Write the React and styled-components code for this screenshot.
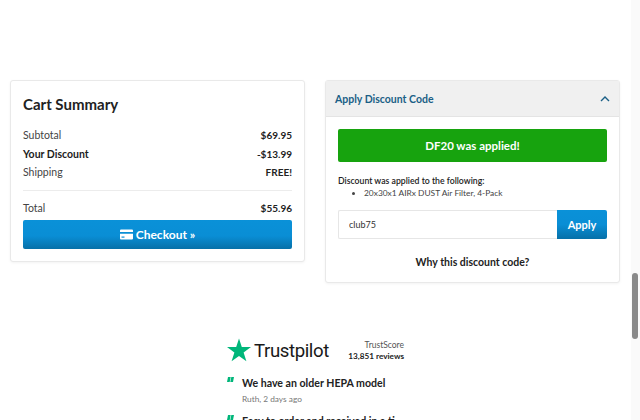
import React from "react";
import styled, { createGlobalStyle } from "styled-components";

const Global = createGlobalStyle`
  html, body { margin: 0; padding: 0; height: 420px; overflow: hidden; background: #fff; }
  body { font-family: "Lato", "Liberation Sans", sans-serif; color: #222; }
  #root { height: 420px; overflow: hidden; position: relative; }
  * { box-sizing: border-box; }
`;

const Page = styled.div`
  width: 640px;
  height: 420px;
  overflow: hidden;
  padding-top: 80px;
  padding-right: 20px;
  padding-left: 10px;
`;

const Columns = styled.div`
  display: grid;
  grid-template-columns: 295px 295px;
  column-gap: 20px;
  align-items: start;
`;

const Card = styled.section`
  background: #fff;
  border: 1px solid #e9e9e9;
  border-radius: 3px;
  box-shadow: 0 1px 3px rgba(0, 0, 0, 0.05);
`;

const SummaryCard = styled(Card)`
  height: 182px;
  padding: 13px 12px 13px 12px;
`;

const Title = styled.h2`
  margin: 0 0 12px;
  font-size: 15px;
  line-height: 20px;
  font-weight: 700;
  color: #222;
`;

const Row = styled.div`
  display: flex;
  justify-content: space-between;
  align-items: center;
  height: 18.5px;
  font-size: 10.5px;
  color: ${(p) => (p.$strong ? "#1c1c1c" : "#444")};
  font-weight: ${(p) => (p.$strong ? 700 : 400)};
`;

const Amount = styled.span`
  font-size: 10px;
  font-weight: 700;
  color: #222;
`;

const Divider = styled.hr`
  border: 0;
  border-top: 1px solid #ececec;
  margin: 8px 0 8px;
`;

const CheckoutButton = styled.button`
  width: 100%;
  height: 29px;
  margin-top: 3px;
  padding-bottom: 2px;
  border: 0;
  border-radius: 2px;
  background: linear-gradient(#0a91d8 0%, #0a8ed5 55%, #0670a8 100%);
  color: #fff;
  font: 700 12px "Lato", "Liberation Sans", sans-serif;
  display: flex;
  align-items: center;
  justify-content: center;
  gap: 3px;
`;

const AccordionHeader = styled.header`
  height: 36px;
  background: #f0f0f0;
  border-bottom: 1px solid #e4e4e4;
  display: flex;
  align-items: center;
  justify-content: space-between;
  padding: 0 9px 0 9px;
  color: #1a5f86;
  font-size: 10.5px;
  font-weight: 700;
`;

const DiscountBody = styled.div`
  height: 165px;
  padding: 12px 12px 0 12px;
  display: flex;
  flex-direction: column;
`;

const Applied = styled.div`
  height: 33px;
  background: #17a30e;
  border-radius: 2px;
  color: #fff;
  font-size: 11.5px;
  font-weight: 700;
  display: flex;
  align-items: center;
  justify-content: center;
`;

const AppliedNote = styled.p`
  margin: 12px 0 0;
  font-size: 8.7px;
  line-height: 13px;
  font-weight: 600;
  color: #222;
`;

const AppliedList = styled.ul`
  margin: 0;
  padding-left: 26px;
  font-size: 8.4px;
  line-height: 13px;
  color: #444;
`;

const CodeForm = styled.div`
  display: flex;
  height: 29px;
  margin-top: 10px;
`;

const CodeInput = styled.input`
  flex: 1;
  min-width: 0;
  border: 1px solid #e6e6e6;
  border-right: 0;
  border-radius: 2px 0 0 2px;
  padding: 0 10px;
  font: 400 9px "Lato", "Liberation Sans", sans-serif;
  color: #333;
  outline: none;
`;

const ApplyButton = styled.button`
  width: 50px;
  border: 0;
  border-radius: 0 2px 2px 0;
  background: linear-gradient(#0a91d8 0%, #0a8ed5 50%, #0670a8 100%);
  color: #fff;
  font: 700 11px "Lato", "Liberation Sans", sans-serif;
`;

const WhyLink = styled.div`
  margin-top: 17px;
  text-align: center;
  font-size: 10.5px;
  font-weight: 700;
  color: #222;
`;

const Trust = styled.section`
  width: 177px;
  margin: 54px 0 0 217px;
`;

const TrustHeader = styled.div`
  display: flex;
  align-items: center;
  justify-content: space-between;
  height: 25px;
`;

const Logo = styled.div`
  display: flex;
  align-items: center;
  gap: 3px;
`;

const LogoText = styled.span`
  font: 400 18.6px/24px "Roboto", "Liberation Sans", sans-serif;
  letter-spacing: -0.4px;
  color: #191919;
  padding-top: 3px;
`;

const TrustScore = styled.div`
  text-align: right;
  font-size: 8.5px;
  line-height: 11px;
  color: #555;
  padding-top: 3px;
`;

const Reviews = styled.div`
  font-size: 8.2px;
  font-weight: 700;
  color: #222;
`;

const Quote = styled.article`
  display: grid;
  grid-template-columns: 15px 1fr;
  margin-top: ${(p) => p.$gap}px;
`;

const QuoteTitle = styled.div`
  font-size: 10.6px;
  line-height: 13px;
  font-weight: 700;
  color: #222;
  white-space: nowrap;
`;

const QuoteMeta = styled.div`
  margin-top: 4px;
  font-size: 8.3px;
  line-height: 11px;
  color: #777;
`;

const Scrollbar = styled.div`
  position: absolute;
  top: 0;
  right: 0;
  width: 9px;
  height: 420px;
  background: #fafafa;
`;

const Thumb = styled.div`
  position: absolute;
  top: 273px;
  left: 1px;
  width: 6px;
  height: 66px;
  border-radius: 3px;
  background: #8a8a8a;
`;

const CardIcon = () => (
  <svg width="13" height="11" viewBox="0 0 13 11" aria-hidden="true">
    <path d="M1 .5h11a1 1 0 0 1 1 1V3H0V1.500a1 1 0 0 1 1-1zM0 4.800h13v4.700a1 1 0 0 1-1 1H1a1 1 0 0 1-1-1z" fill="#fff" />
    <rect x="1.500" y="7.500" width="3" height="1.200" fill="#0a8ed5" />
  </svg>
);

const Chevron = () => (
  <svg width="10" height="6" viewBox="0 0 10 6" aria-hidden="true">
    <path d="M1 5l4-4 4 4" fill="none" stroke="#1a5f86" strokeWidth="1.400" />
  </svg>
);

const Star = () => (
  <svg width="24" height="24" viewBox="0 0 24 24" aria-hidden="true">
    <path d="M12 0.500l2.800 8.600H24l-7.400 5.400 2.800 8.800L12 17.900l-7.400 5.400 2.800-8.800L0 9.100h9.200z" fill="#00b67a" />
  </svg>
);

const QuoteMark = () => (
  <svg width="7" height="5" viewBox="0 0 7 5" aria-hidden="true">
    <path d="M1 0H3.700L2.700 5H0zM4.300 0H7L6 5H3.300z" fill="#00b67a" />
  </svg>
);

export default function App() {
  return (
    <>
      <Global />
      <Page>
        <Columns>
          <SummaryCard>
            <Title>Cart Summary</Title>
            <Row><span>Subtotal</span><Amount>$69.95</Amount></Row>
            <Row $strong><span>Your Discount</span><Amount>-$13.99</Amount></Row>
            <Row><span>Shipping</span><Amount>FREE!</Amount></Row>
            <Divider />
            <Row><span>Total</span><Amount>$55.96</Amount></Row>
            <CheckoutButton><CardIcon /> Checkout »</CheckoutButton>
          </SummaryCard>
          <Card>
            <AccordionHeader>
              <span>Apply Discount Code</span>
              <Chevron />
            </AccordionHeader>
            <DiscountBody>
              <Applied>DF20 was applied!</Applied>
              <AppliedNote>Discount was applied to the following:</AppliedNote>
              <AppliedList><li>20x30x1 AIRx DUST Air Filter, 4-Pack</li></AppliedList>
              <CodeForm>
                <CodeInput defaultValue="club75" />
                <ApplyButton>Apply</ApplyButton>
              </CodeForm>
              <WhyLink>Why this discount code?</WhyLink>
            </DiscountBody>
          </Card>
        </Columns>
        <Trust>
          <TrustHeader>
            <Logo><Star /><LogoText>Trustpilot</LogoText></Logo>
            <TrustScore>TrustScore<Reviews>13,851 reviews</Reviews></TrustScore>
          </TrustHeader>
          <Quote $gap={15}>
            <QuoteMark />
            <div>
              <QuoteTitle>We have an older HEPA model</QuoteTitle>
              <QuoteMeta>Ruth, 2 days ago</QuoteMeta>
            </div>
          </Quote>
          <Quote $gap={10}>
            <QuoteMark />
            <div>
              <QuoteTitle>Easy to order and received in a ti</QuoteTitle>
            </div>
          </Quote>
        </Trust>
      </Page>
      <Scrollbar><Thumb /></Scrollbar>
    </>
  );
}
